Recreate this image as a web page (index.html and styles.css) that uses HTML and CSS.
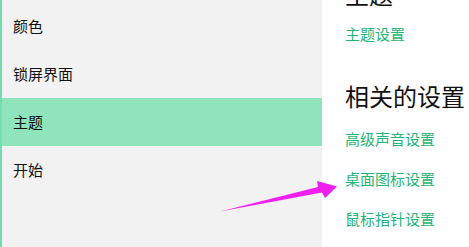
FILE: index.html
```html
<!DOCTYPE html>
<html lang="zh">
<head>
<meta charset="utf-8">
<link rel="stylesheet" href="styles.css">
</head>
<body>
<div class="page">
  <nav class="sidebar">
    <div class="item">颜色</div>
    <div class="item">锁屏界面</div>
    <div class="item selected">主题</div>
    <div class="item">开始</div>
  </nav>
  <main class="content">
    <h2 class="title cut">主题</h2>
    <a class="link first">主题设置</a>
    <h2 class="title related">相关的设置</h2>
    <div class="links">
      <a class="link">高级声音设置</a>
      <a class="link">桌面图标设置</a>
      <a class="link">鼠标指针设置</a>
    </div>
  </main>
  <svg class="arrow" width="469" height="247" viewBox="0 0 469 247">
    <polygon points="220,211.5 318,187 317,181 337,186.5 325,198 322,192.5" fill="#ef1ff0"/>
  </svg>
</div>
</body>
</html>
```

FILE: styles.css
```css
html, body {
  margin: 0;
  padding: 0;
}
body {
  font-family: "Noto Sans CJK SC", "Noto Sans", sans-serif;
  background: #ffffff;
}
.page {
  position: relative;
  display: flex;
  width: 469px;
  height: 247px;
  overflow: hidden;
}
.sidebar {
  width: 320px;
  flex: none;
  background: #f2f2f2;
  border-left: 2px solid #74dcae;
  padding-top: 2px;
  box-sizing: content-box;
}
.item {
  height: 48px;
  line-height: 48px;
  padding-left: 11px;
  font-size: 15px;
  color: #111111;
}
.item.selected {
  background: #90e4bc;
}
.content {
  flex: 1;
  padding-left: 23px;
  display: flex;
  flex-direction: column;
  align-items: flex-start;
}
.title {
  margin: 0;
  font-weight: normal;
  font-size: 24px;
  line-height: 24px;
  color: #111111;
  white-space: nowrap;
}
.title.cut {
  margin-top: -18px;
}
.title.related {
  margin-top: 40px;
}
.link {
  display: block;
  font-size: 15px;
  line-height: 20px;
  color: #1fb577;
  white-space: nowrap;
}
.link.first {
  margin-top: 18px;
}
.links {
  margin-top: 21px;
  display: flex;
  flex-direction: column;
  gap: 20px;
}
.arrow {
  position: absolute;
  left: 0;
  top: 0;
  pointer-events: none;
}
```
